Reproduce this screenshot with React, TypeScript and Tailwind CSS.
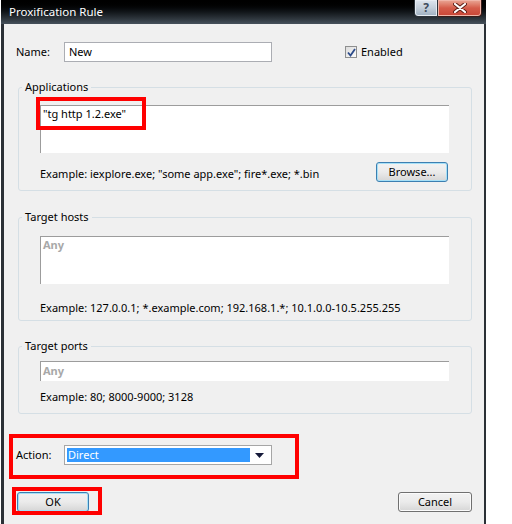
import React from 'react';

const font = { fontFamily: '"Noto Sans", "Open Sans", sans-serif' };

function GroupBox({ title, className, children }: { title: string; className: string; children: React.ReactNode }) {
  return (
    <div className={`relative ml-[14px] mr-[12px] border border-[#d5dfe5] rounded-[3px] ${className}`}>
      <span className="absolute -top-[9px] left-[3px] bg-[#f0f0f0] px-[3px] leading-[16px] text-[#000]">{title}</span>
      {children}
    </div>
  );
}

function WinButton({ label, focused, className }: { label: string; focused?: boolean; className?: string }) {
  return (
    <button
      type="button"
      className={`h-[20px] w-[72px] rounded-[3px] border ${
        focused ? 'border-[#3c7fb1] shadow-[inset_0_0_0_1px_#a6e0f7]' : 'border-[#707070] shadow-[inset_0_0_0_1px_#fbfbfb]'
      } bg-gradient-to-b from-[#f2f2f2] via-[#ebebeb] to-[#d6d6d6] text-[11px] leading-[16px] text-black ${className ?? ''}`}
    >
      {label}
    </button>
  );
}

export default function App() {
  return (
    <div className="relative w-[512px] h-[524px] bg-white overflow-hidden text-[11px] text-black" style={font}>
      {/* window frame */}
      <div className="ml-[1px] w-[485px] h-[524px] flex flex-col bg-[#2b3036]">
        {/* title bar */}
        <div className="relative h-[24px] shrink-0 bg-gradient-to-b from-[#000000] via-[#12161a] to-[#46515b] flex items-center">
          <span className="pl-[8px] text-[11.5px] text-white leading-none">Proxification Rule</span>
          <div className="absolute right-[4px] top-0 flex">
            <div className="w-[24px] h-[17px] rounded-bl-[4px] border border-t-0 border-[#2c333a] shadow-[inset_0_0_0_1px_#e6ecf2] bg-gradient-to-b from-[#dfe6ee] via-[#c3ced9] to-[#9eafc0] flex items-center justify-center">
              <span className="text-[12px] font-bold leading-none text-[#3e4c5c]">?</span>
            </div>
            <div className="w-[44px] h-[17px] rounded-br-[4px] border border-l-0 border-t-0 border-[#3a1c18] shadow-[inset_0_0_0_1px_#f0b5a8] bg-gradient-to-b from-[#e9a796] via-[#d55c4a] to-[#c84536] flex items-center justify-center">
              <svg width="14" height="10" viewBox="0 0 14 10">
                <path d="M2 1 L12 9 M12 1 L2 9" stroke="#5b1d14" strokeWidth="4" strokeLinecap="round" />
                <path d="M2 1 L12 9 M12 1 L2 9" stroke="#ffffff" strokeWidth="2.2" strokeLinecap="round" />
              </svg>
            </div>
          </div>
        </div>

        {/* client area */}
        <div className="flex-1 ml-[3px] mr-[2px] bg-[#f0f0f0] flex flex-col pt-[18px]">
          {/* name row */}
          <div className="flex items-center h-[20px]">
            <span className="ml-[12px] w-[48px]">Name:</span>
            <div className="w-[208px] h-[20px] border border-[#abadb3] bg-white flex items-center pl-[4px]">New</div>
            <div className="ml-[73px] flex items-center gap-[4px]">
              <div className="w-[12px] h-[12px] border border-[#8e8f8f] bg-gradient-to-br from-[#dcdcdc] to-[#fbfbfb] flex items-center justify-center">
                <svg width="9" height="9" viewBox="0 0 9 9">
                  <path d="M1 4.5 L3.5 7.5 L8 1" fill="none" stroke="#2c4b8a" strokeWidth="1.8" />
                </svg>
              </div>
              <span>Enabled</span>
            </div>
          </div>

          {/* Applications */}
          <GroupBox title="Applications" className="mt-[25px] h-[104px] pt-[17px] pl-[21px] pr-[22px]">
            <div className="h-[48px] bg-white border-t border-l border-[#9c9c9c] pl-[2px] pt-[1px] leading-[14px]">"tg http 1.2.exe"</div>
            <div className="flex items-center justify-between mt-[9px] pr-[1px]">
              <span className="mt-[4px]">Example: iexplore.exe; "some app.exe"; fire*.exe; *.bin</span>
              <WinButton label="Browse..." focused />
            </div>
          </GroupBox>

          {/* Target hosts */}
          <GroupBox title="Target hosts" className="mt-[26px] h-[104px] pt-[18px] pl-[21px] pr-[22px]">
            <div className="h-[48px] bg-white border-t border-l border-[#9c9c9c] pl-[2px] pt-[1px] leading-[14px] font-bold text-[#a8a8a8]">Any</div>
            <div className="mt-[16px]">Example: 127.0.0.1; *.example.com; 192.168.1.*; 10.1.0.0-10.5.255.255</div>
          </GroupBox>

          {/* Target ports */}
          <GroupBox title="Target ports" className="mt-[25px] h-[68px] pt-[14px] pl-[21px] pr-[22px]">
            <div className="h-[20px] bg-white border-t border-l border-[#9c9c9c] pl-[2px] flex items-center font-bold text-[#a8a8a8]">Any</div>
            <div className="mt-[8px]">Example: 80; 8000-9000; 3128</div>
          </GroupBox>

          {/* Action row */}
          <div className="flex items-center h-[20px] mt-[31px]">
            <span className="ml-[12px] w-[48px]">Action:</span>
            <div className="w-[208px] h-[20px] border border-[#a6a6a6] bg-white flex items-center p-[2px]">
              <div className="flex-1 h-full bg-[#3399ff] text-white pl-[1px] flex items-center">Direct</div>
              <div className="w-[19px] flex items-center justify-center">
                <svg width="9" height="5" viewBox="0 0 9 5">
                  <path d="M0 0 L9 0 L4.5 5 Z" fill="#151a3a" />
                </svg>
              </div>
            </div>
          </div>

          {/* buttons */}
          <div className="flex justify-between mt-[27px] ml-[13px] mr-[12px]">
            <WinButton label="OK" focused />
            <WinButton label="Cancel" className="w-[74px]" />
          </div>
        </div>
      </div>

      {/* red annotation frames */}
      <div className="absolute left-[36px] top-[97px] w-[110px] h-[33px] border-[4px] border-[#ff0000] pointer-events-none" />
      <div className="absolute left-[9px] top-[434px] w-[290px] h-[45px] border-[4px] border-[#ff0000] pointer-events-none" />
      <div className="absolute left-[12px] top-[487px] w-[90px] h-[28px] border-[4px] border-[#ff0000] pointer-events-none" />
    </div>
  );
}
